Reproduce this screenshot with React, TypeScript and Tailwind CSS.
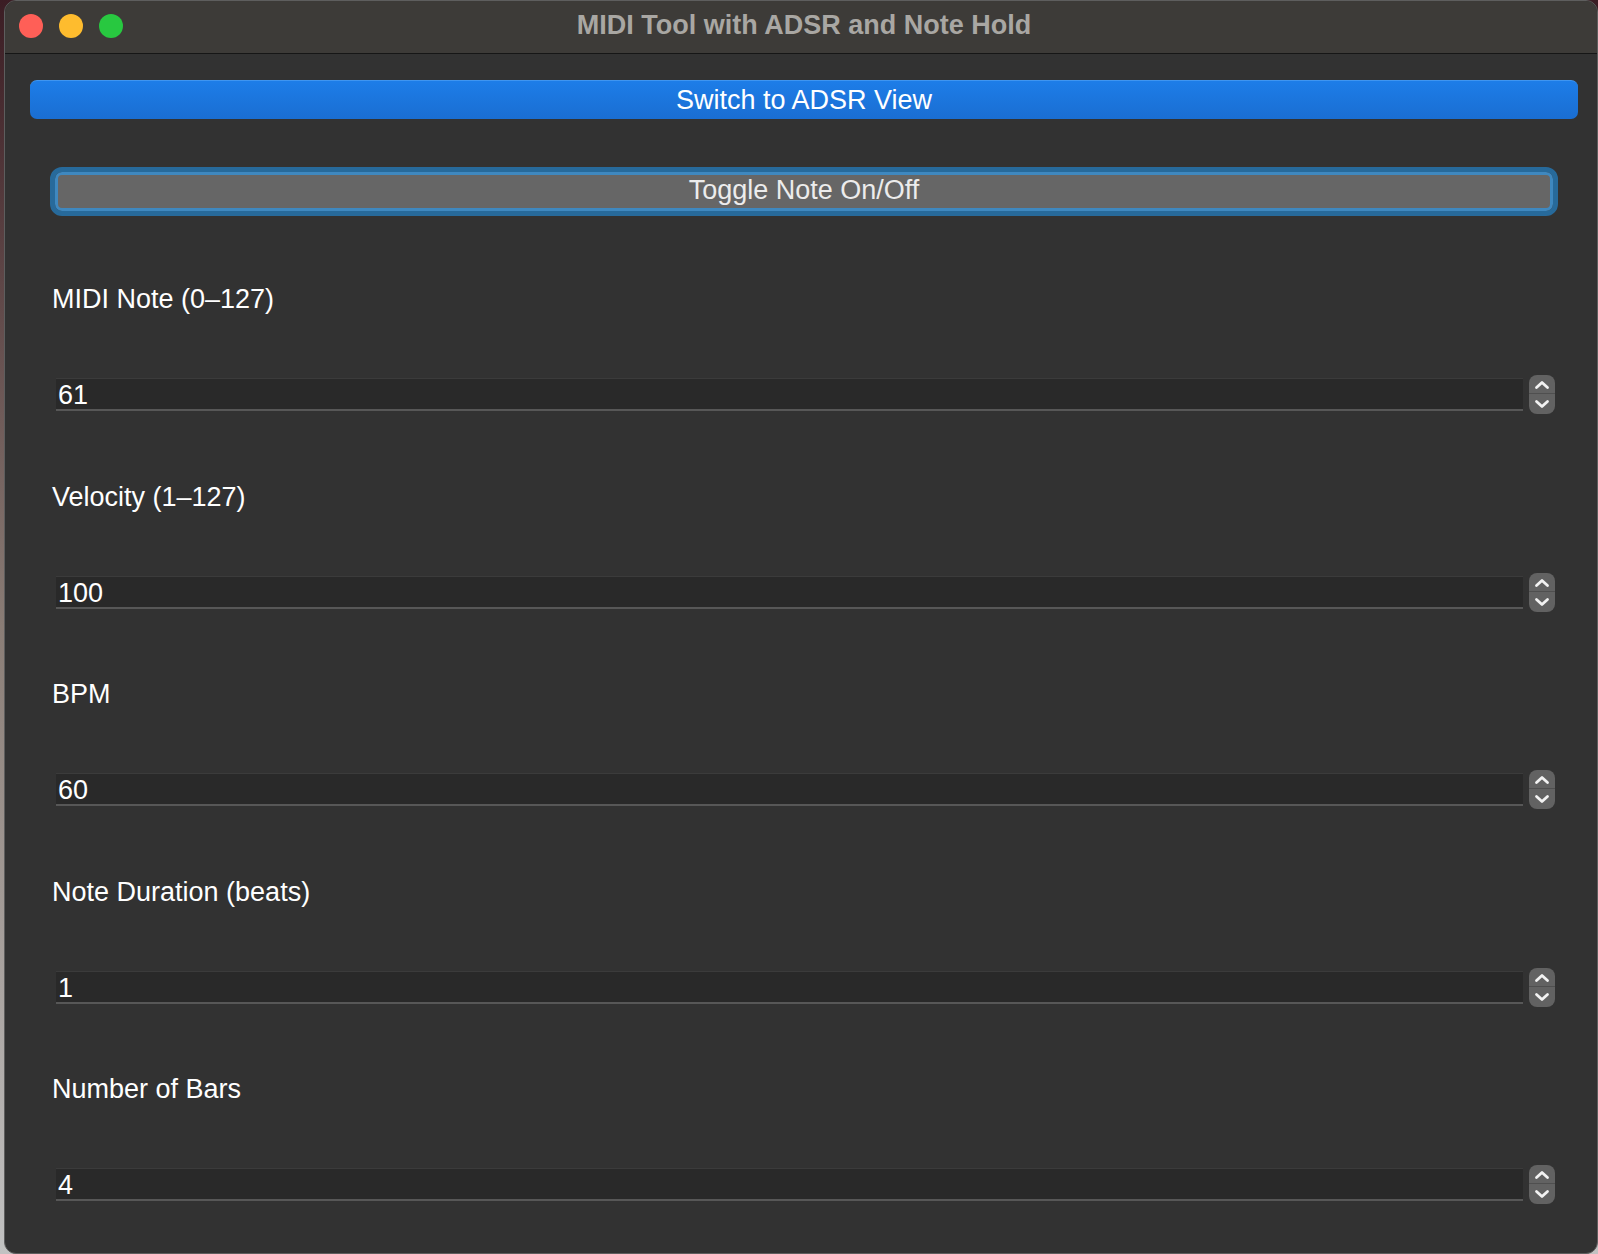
import React from "react";

const font = { fontFamily: '"Liberation Sans", Arial, sans-serif' };

function Spinner() {
  return (
    <div className="relative w-[26px] h-[39px] rounded-[8px] bg-[#626262] flex flex-col shrink-0">
      <div className="h-[19px] border-b border-[#4f4f4f]" />
      <svg
        className="absolute inset-0"
        width="26"
        height="39"
        viewBox="0 0 26 39"
        fill="none"
      >
        <polyline
          points="7.5,12.5 13,7.5 18.5,12.5"
          stroke="#f2f2f2"
          strokeWidth="2.8"
          strokeLinecap="round"
          strokeLinejoin="round"
        />
        <polyline
          points="7.5,26.5 13,31.5 18.5,26.5"
          stroke="#f2f2f2"
          strokeWidth="2.8"
          strokeLinecap="round"
          strokeLinejoin="round"
        />
      </svg>
    </div>
  );
}

function Field({
  label,
  value,
  mt,
}: {
  label: string;
  value: string;
  mt: string;
}) {
  return (
    <div className={`flex flex-col ${mt}`}>
      <div className="pl-[2px] h-[30px] leading-[30px] text-[27px] text-white">
        {label}
      </div>
      <div className="mt-[61px] h-[39px] flex items-center pl-[6px] pr-[3px]">
        <div className="flex-1 h-[33px] bg-[#292929] border-t border-b-2 border-t-[#3b3b3b] border-b-[#575757]">
          <div className="pl-[2px] pt-[3px] leading-[27px] text-[27px] text-white">
            {value}
          </div>
        </div>
        <div className="w-[6px]" />
        <Spinner />
      </div>
    </div>
  );
}

export default function App() {
  return (
    <div
      className="w-[1598px] h-[1254px] pl-[4px] flex bg-gradient-to-b from-[#3b1d24] via-[#8a7d76] to-[#c2c2c2]"
      style={font}
    >
      <div className="flex-1 flex flex-col rounded-[12px] overflow-hidden border border-[#5e5e5e] bg-[#323232]">
        {/* title bar */}
        <div className="h-[53px] shrink-0 bg-[#3d3b38] border-b border-[#161616] grid grid-cols-[1fr_auto_1fr] items-start">
          <div className="flex gap-[16px] pl-[14px] pt-[13px]">
            <div className="w-[24px] h-[24px] rounded-full bg-[#ff5f57]" />
            <div className="w-[24px] h-[24px] rounded-full bg-[#febc2e]" />
            <div className="w-[24px] h-[24px] rounded-full bg-[#28c840]" />
          </div>
          <div className="pt-[9px] pl-[6px] leading-[30px] text-[27px] font-bold text-[#a9a7a3] whitespace-nowrap">
            MIDI Tool with ADSR and Note Hold
          </div>
          <div />
        </div>

        {/* content */}
        <div className="flex flex-col">
          <div className="mt-[26px] ml-[25px] mr-[19px] h-[39px] rounded-[7px] bg-gradient-to-b from-[#1d7de8] to-[#1a6ed2] border-t border-[#3f95f0] flex items-center justify-center">
            <span className="leading-[38px] text-[27px] text-white">
              Switch to ADSR View
            </span>
          </div>

          <div className="ml-[45px] mr-[39px] flex flex-col">
            <div className="mt-[48px] h-[49px] rounded-[12px] border-[5px] border-[#276a9b]">
              <div className="h-[39px] rounded-[7px] border-[3px] border-[#3f88bf] bg-[#666666] flex justify-center">
                <span className="pt-[1px] leading-[29px] text-[27px] text-[#ececec]">
                  Toggle Note On/Off
                </span>
              </div>
            </div>

            <Field label="MIDI Note (0–127)" value="61" mt="mt-[68px]" />
            <Field label="Velocity (1–127)" value="100" mt="mt-[68px]" />
            <Field label="BPM" value="60" mt="mt-[67px]" />
            <Field label="Note Duration (beats)" value="1" mt="mt-[68px]" />
            <Field label="Number of Bars" value="4" mt="mt-[67px]" />
          </div>
        </div>
      </div>
    </div>
  );
}
